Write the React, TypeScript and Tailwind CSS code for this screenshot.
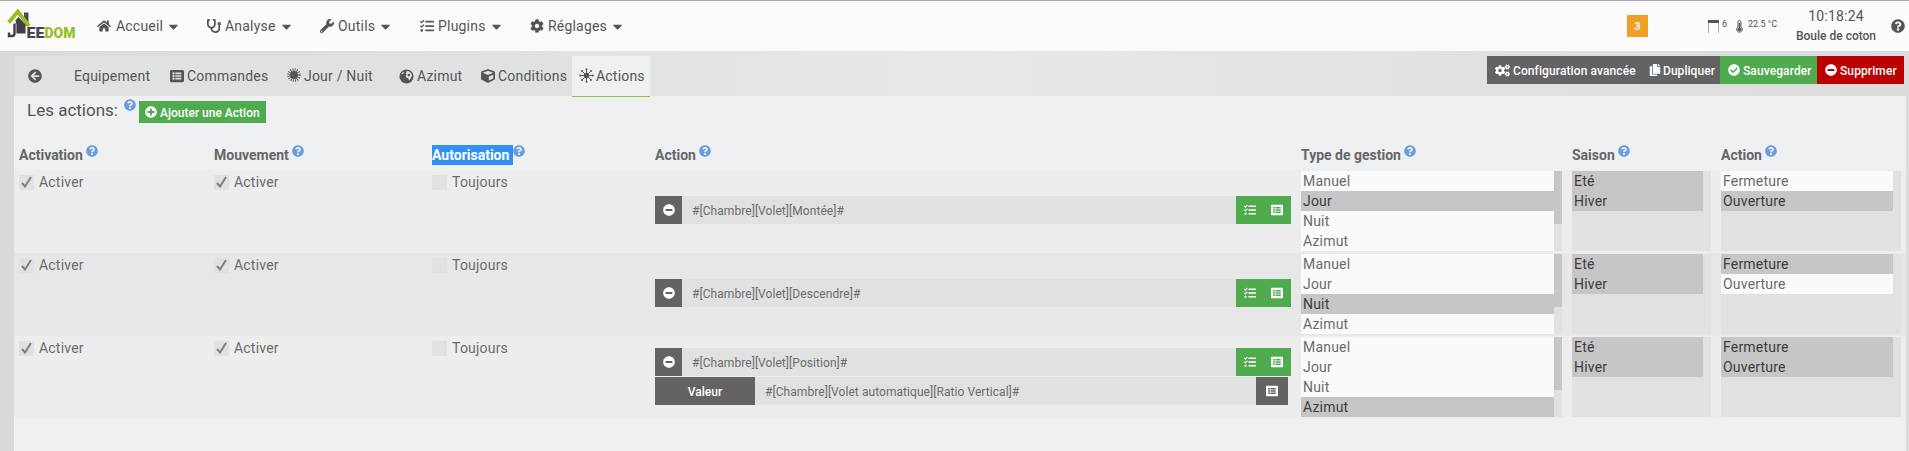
import React from 'react';
import {
  FaHome, FaStethoscope, FaWrench, FaTasks, FaCog, FaCaretDown, FaArrowCircleLeft, FaListAlt,
  FaCube, FaPlusCircle, FaQuestionCircle, FaCogs, FaCopy, FaCheckCircle, FaMinusCircle,
} from 'react-icons/fa';

const Logo = () => (
  <svg width="72" height="34" viewBox="0 0 72 34">
    <path d="M17 3.500h4.500v13h-4.500z" fill="#4a4a52" />
    <path d="M7 13L11.500 8L18.500 15.500V24.500H7z" fill="#3f3e49" />
    <path d="M7.500 14.500v10.500q0 2-2 2H.5" fill="none" stroke="#fafafa" strokeWidth="3.800" />
    <path d="M7.500 14.500v10q0 2.500-2.500 2.500H2V23.500" fill="none" stroke="#3f3e49" strokeWidth="2.400" />
    <circle cx="7.500" cy="13" r="1.500" fill="#fafafa" />
    <path d="M1.700 13.500L10.800 2.500L22 17" fill="none" stroke="#94c11f" strokeWidth="3.800" />
    <text x="19.500" y="28.500" fontFamily="Roboto" fontWeight="900" fontSize="14.200" textLength="18" lengthAdjust="spacingAndGlyphs" fill="#45444f">EE</text>
    <text x="37.500" y="28.500" fontFamily="Roboto" fontWeight="900" fontSize="14.200" textLength="31" lengthAdjust="spacingAndGlyphs" fill="#94c11f">DOM</text>
  </svg>
);

const SunSpikes = () => (
  <svg width="14" height="14" viewBox="0 0 14 14" stroke="#555" fill="#555" className="-mt-[3px]">
    <circle cx="7" cy="7" r="4" stroke="none" />
    <circle cx="7" cy="7" r="5.300" fill="none" strokeWidth="3" strokeDasharray="0.900 1.180" />
  </svg>
);

const SunRays = () => (
  <svg width="15" height="15" viewBox="0 0 15 15" fill="#555" stroke="#555" strokeWidth="0.900" className="-mt-[2px] shrink-0">
    <circle cx="7.500" cy="7.500" r="2.700" stroke="none" />
    <path d="M7.500 1v4M7.500 10v4M1 7.500h4M10 7.500h4M3 3l3 3M9 9l3 3M12 3l-3 3M6 9l-3 3" />
    <path
      d="M7.500 1.200v0M7.500 13.800v0M1.200 7.500h0M13.800 7.500h0M3 3h0M12 12h0M12 3h0M3 12h0"
      strokeWidth="2"
      strokeLinecap="round"
    />
  </svg>
);

const Globe = () => (
  <svg width="15" height="15" viewBox="0 0 15 15" className="shrink-0">
    <circle cx="7.500" cy="7.500" r="7" fill="#555" />
    <path d="M7.500 2l2.500.3 2.300 2.200.7 2.500-1 1.500-.8 2-1.200.8-.8-2-2-.8-.5-1.700 1-1.300-1-.8.500-1z" fill="#e0e2e1" />
    <path d="M9 4.800l1.700.3.4 1.500-1.300.8-1.200-.8z" fill="#555" />
    <path d="M2.500 4.500l1.500-1.500 1 .3-.7 1.300-1.300.6z" fill="#e0e2e1" />
  </svg>
);

const nav = [
  { label: 'Accueil', Icon: FaHome, w: 'w-[110px]', gap: 'ml-[5px]' },
  { label: 'Analyse', Icon: FaStethoscope, w: 'w-[113px]', gap: 'ml-1' },
  { label: 'Outils', Icon: FaWrench, w: 'w-[100px]', gap: 'ml-1' },
  { label: 'Plugins', Icon: FaTasks, w: 'w-[110px]', gap: 'ml-1' },
  { label: 'Réglages', Icon: FaCog, w: 'w-[100px]', gap: 'ml-1' },
];

const tabs = [
  { label: 'Commandes', icon: <FaListAlt size={14} />, w: 'w-[117px]' },
  { label: 'Jour / Nuit', icon: <SunSpikes />, w: 'w-[112px]' },
  { label: 'Azimut', icon: <Globe />, w: 'w-[82px]' },
  { label: 'Conditions', icon: <FaCube size={14} />, w: 'w-[91px]' },
];

const Help = ({ className = '' }: { className?: string }) => (
  <FaQuestionCircle size={12} className={'shrink-0 text-[#6a9de0] ' + className} />
);

const Check = ({ label, checked }: { label: string; checked?: boolean }) => (
  <div className="flex h-5 items-center">
    <span className="mt-[2px] flex size-[15px] shrink-0 items-center justify-center bg-[#e0e2e1]">
      {checked && (
        <svg width="11" height="12" viewBox="0 0 11 12" fill="none" stroke="#7d8080" strokeWidth="2">
          <path d="M1 7l3 3.500L10 1" />
        </svg>
      )}
    </span>
    <span className="mt-px ml-[5px] text-[14px] leading-4 tracking-[0.2px]">{label}</span>
  </div>
);

const List = ({ items, selected, scroll }: { items: string[]; selected: string[]; scroll?: boolean }) => (
  <div className="flex h-20 w-full bg-[#e0e2e1]">
    <div className="flex-1">
      {items.map((i) => (
        <div
          key={i}
          className={'h-5 pl-[2px] text-[14px] leading-5 tracking-[0.2px] ' + (selected.includes(i) ? 'bg-[#c6c6c6] text-[#3c3c3c]' : 'bg-[#fafafa] text-[#6b6b6b]')}
        >
          {i}
        </div>
      ))}
    </div>
    <div className="w-2">{scroll && <div className="h-[53px] bg-[#c6c6c6]" />}</div>
  </div>
);

const rows = [
  { cmd: '#[Chambre][Volet][Montée]#', type: 'Jour', actions: ['Ouverture'], look: 'h-[83px] bg-[#ededed]' },
  { cmd: '#[Chambre][Volet][Descendre]#', type: 'Nuit', actions: ['Fermeture'], look: 'h-[83px] bg-[#e7e7e8]' },
  { cmd: '#[Chambre][Volet][Position]#', type: 'Azimut', actions: ['Fermeture', 'Ouverture'], look: 'h-[82px] bg-[#ededed]', value: '#[Chambre][Volet automatique][Ratio Vertical]#' },
];

const cols = 'grid grid-cols-[195px_218px_223px_646px_271px_149px_180px] pl-[5px]';

const headers = ['Activation', 'Mouvement', 'Autorisation', 'Action', 'Type de gestion', 'Saison', 'Action'];

export default function App() {
  return (
    <div className="flex h-[451px] w-[1909px] flex-col overflow-hidden bg-linear-to-r from-[#dadadc] via-[#e8e8ea] to-[#dcdcde] font-[Roboto,sans-serif] text-[14px] text-[#555]">
      <header className="flex h-[51px] shrink-0 items-center border-t border-[#a9a7a8] bg-[#fbfbfb]">
        <div className="w-[90px] pl-[7px]"><Logo /></div>
        <nav className="flex pl-[7px]">
          {nav.map(({ label, Icon, w, gap }) => (
            <div key={label} className={'flex items-center ' + w}>
              <Icon size={14} />
              <span className={'text-[14px] tracking-[0.2px] ' + gap}>{label}</span>
              <FaCaretDown size={15} className="ml-[3px]" />
            </div>
          ))}
        </nav>
        <div className="ml-auto flex h-full items-center">
          <div className="mr-[60px] flex h-[22px] w-[21px] items-center justify-center bg-[#f0a029] pt-[3px] text-[11px] font-bold text-white/90">3</div>
          <svg width="11" height="13" viewBox="0 0 11 13" className="mt-[1px]">
            <path d="M0 0h11v3H0z" fill="#555" />
            <path d="M.5 3v10M10.500 3v10" stroke="#aaa" />
          </svg>
          <span className="ml-[3px] w-[14px] pb-[3px] text-[9px]">6</span>
          <svg width="7" height="13" viewBox="0 0 7 13" fill="none" stroke="#555">
            <path d="M2 7V2a1.500 1.500 0 0 1 3 0v5a2.800 2.800 0 1 1-3 0z" />
            <path d="M3.500 3v6" strokeWidth="1.500" />
            <circle cx="3.500" cy="9.500" r="1.500" fill="#555" />
          </svg>
          <span className="ml-[5px] w-[47px] pb-[3px] text-[9px]">22.5 °C</span>
          <div className="w-[82px] text-center">
            <div className="text-[14px] leading-5 tracking-[0.2px]">10:18:24</div>
            <div className="text-[12px] leading-5 font-medium">Boule de coton</div>
          </div>
          <FaQuestionCircle size={14} className="mr-1 ml-[14px]" />
        </div>
      </header>

      <div className="mt-[5px] mr-[5px] ml-[14px] flex h-10 shrink-0">
        <div className="flex h-10 items-center bg-[#e0e2e1] pl-[14px]">
          <div className="w-[46px]"><FaArrowCircleLeft size={14} /></div>
          <div className="w-[96px] tracking-[0.2px]">Equipement</div>
          {tabs.map((t) => (
            <div key={t.label} className={'flex items-center ' + t.w}>
              {t.icon}
              <span className="ml-[3px] tracking-[0.2px] whitespace-nowrap">{t.label}</span>
            </div>
          ))}
        </div>
        <div className="relative z-10 flex h-[41px] w-[78px] items-center border-b border-[#94c13f] bg-[#eff0f2] pl-[7px]">
          <SunRays />
          <span className="ml-[2px] tracking-[0.2px]">Actions</span>
        </div>
        <div className="ml-auto flex h-7 text-[12px] leading-7 font-medium text-white">
          <div className="flex w-[153px] items-center bg-[#636363] pl-2"><FaCogs size={15} /><span className="mt-px ml-[3px] tracking-[0.1px]">Configuration avancée</span></div>
          <div className="flex w-20 items-center bg-[#636363] pl-[9px]"><FaCopy size={12} /><span className="mt-px ml-[2px] tracking-[0.05px]">Dupliquer</span></div>
          <div className="flex w-[97px] items-center bg-[#50ab4f] pl-2"><FaCheckCircle size={12} /><span className="mt-px ml-[3px] tracking-[0.1px]">Sauvegarder</span></div>
          <div className="flex w-[87px] items-center bg-[#ba0000] pl-2"><FaMinusCircle size={12} /><span className="mt-px ml-[3px] tracking-[0.1px]">Supprimer</span></div>
        </div>
      </div>

      <main className="mr-[3px] ml-[14px] flex-1 bg-[#eff0f2]">
        <div className="flex h-[45px]">
          <div className="flex h-8 items-start pl-[13px]">
            <span className="mt-[2px] w-[97px] text-[17px] leading-6">Les actions:</span>
            <Help className="mt-[3px]" />
            <div className="mt-[5px] ml-[3px] flex h-[22px] w-[127px] items-center bg-[#50ab4f] pl-[6px] text-[12px] font-medium text-white">
              <FaPlusCircle size={12} /><span className="mt-px ml-[3px]">Ajouter une Action</span>
            </div>
          </div>
        </div>
        <div className={cols + ' h-[29px]'}>
          {headers.map((h, i) => (
            <div key={i} className="flex items-start text-[14px] font-bold text-[#666]">
              <span className={'mt-[4px] h-5 leading-5 ' + (h === 'Autorisation' ? 'w-[81px] bg-[#3390f5] text-white' : 'mr-[3px]')}>{h}</span>
              <Help className="mt-[4px]" />
            </div>
          ))}
        </div>
        {rows.map((r) => (
          <div key={r.cmd} className={cols + ' pt-px text-[#6b6b6b] ' + r.look}>
            <Check label="Activer" checked />
            <Check label="Activer" checked />
            <Check label="Toujours" />
            <div className={'text-[12px] ' + (r.value ? 'pt-[11px]' : 'pt-[25px]')}>
              <div className="flex h-7 w-[636px]">
                <div className="flex w-[27px] items-center justify-center bg-[#636363] text-white"><FaMinusCircle size={12} /></div>
                <div className="flex-1 bg-[#e0e2e1] pt-px pl-[10px] leading-7 tracking-[0.06px]">{r.cmd}</div>
                <div className="flex w-[55px] items-center bg-[#50ab4f] pl-2 text-white"><FaTasks size={12} /><FaListAlt size={12} className="ml-[15px]" /></div>
              </div>
              {r.value && (
                <div className="mt-px flex h-7 w-[633px]">
                  <div className="w-[100px] bg-[#636363] pt-px text-center leading-7 font-medium text-white">Valeur</div>
                  <div className="flex-1 bg-[#e0e2e1] pt-px pl-[10px] leading-7 tracking-[0.06px]">{r.value}</div>
                  <div className="flex w-8 items-center justify-center bg-[#636363] text-white"><FaListAlt size={12} /></div>
                </div>
              )}
            </div>
            <div className="w-[261px]"><List items={['Manuel', 'Jour', 'Nuit', 'Azimut']} selected={[r.type]} scroll /></div>
            <div className="w-[139px]"><List items={['Eté', 'Hiver']} selected={['Eté', 'Hiver']} /></div>
            <div className="w-[180px]"><List items={['Fermeture', 'Ouverture']} selected={r.actions} /></div>
          </div>
        ))}
      </main>
    </div>
  );
}
